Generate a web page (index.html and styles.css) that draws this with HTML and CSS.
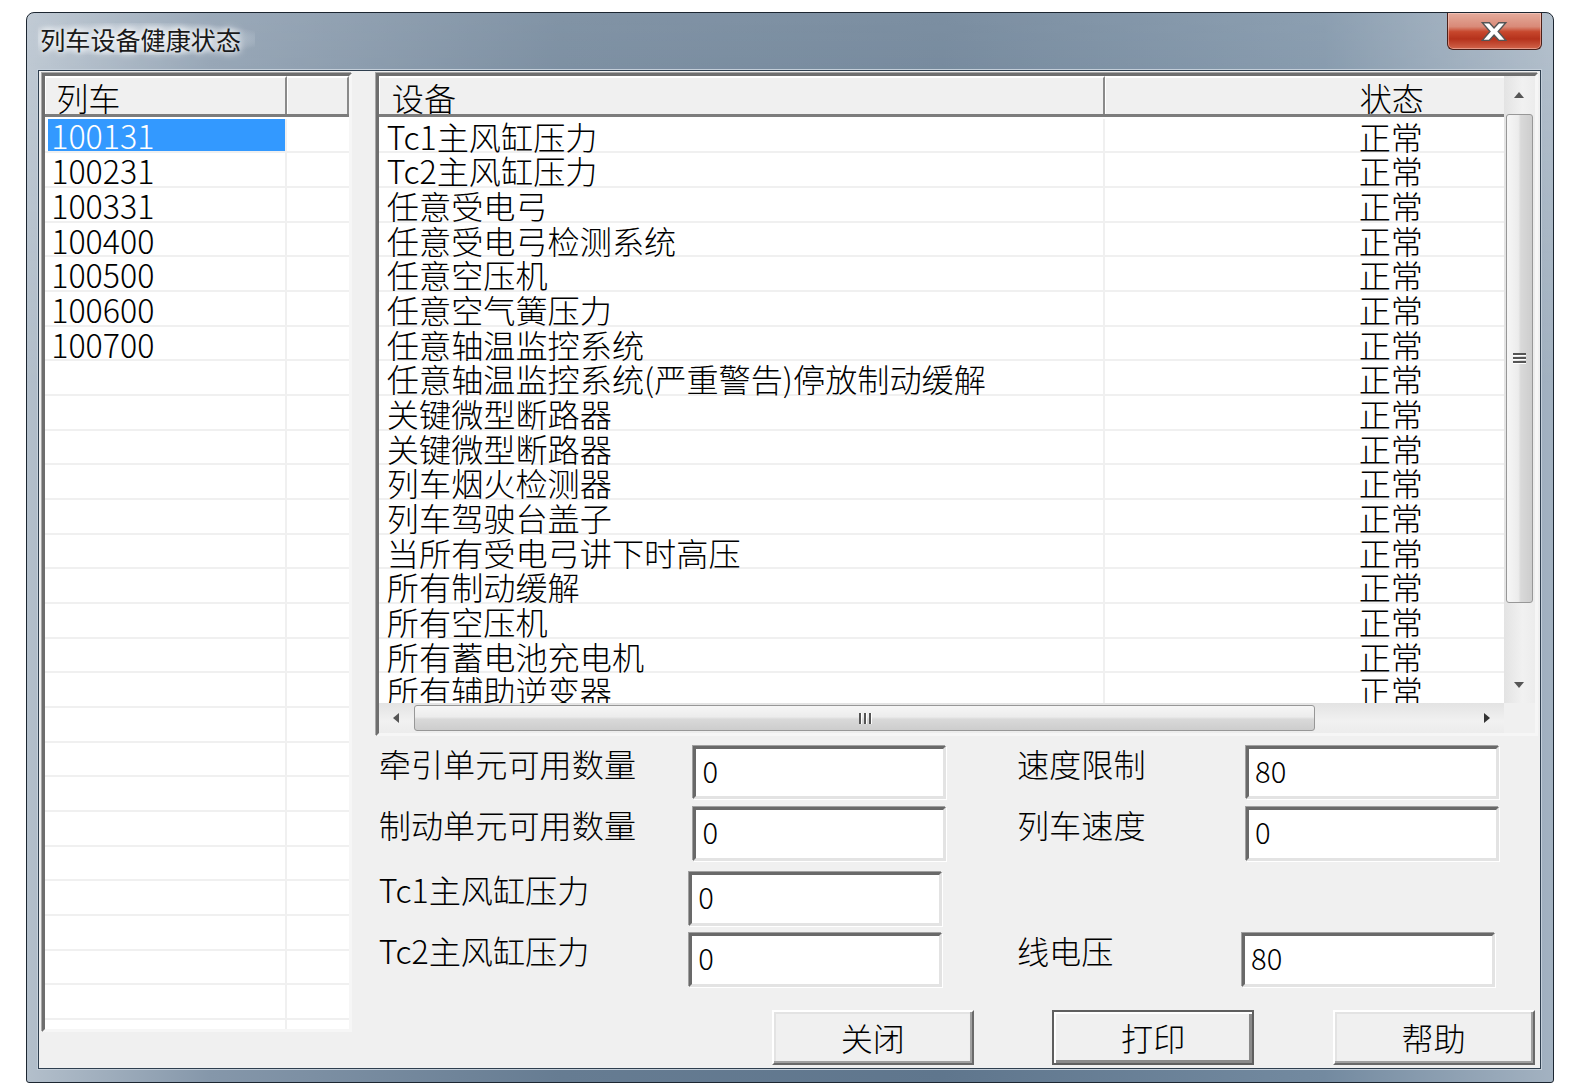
FILE: index.html
```html
<!DOCTYPE html>
<html lang="zh-CN">
<head>
  <meta charset="UTF-8">
  <title>列车设备健康状态</title>
  <link rel="stylesheet" href="styles.css">
</head>
<body>

<div class="window">
  <div class="titlebar">
    <div class="title-text">列车设备健康状态</div>
    <div class="close-btn">
      <svg width="30" height="21" viewBox="0 0 24 18"><polygon points="2,1.5 8,1.5 12,6 16,1.5 22,1.5 15.5,9 22,16.5 16,16.5 12,12 8,16.5 2,16.5 8.5,9" fill="#fff" stroke="#555" stroke-width="1.2"/></svg>
    </div>
  </div>

  <div class="client">
    <!-- 列车列表 -->
    <div class="train-list">
      <div class="lv-head">
        <div class="hcell t-col">列车</div>
        <div class="hcell t-rest"></div>
      </div>
      <div class="lv-body">
        <div class="row selected"><div class="cell t-col"><span>100131</span></div><div class="cell t-rest"></div></div>
        <div class="row"><div class="cell t-col">100231</div><div class="cell t-rest"></div></div>
        <div class="row"><div class="cell t-col">100331</div><div class="cell t-rest"></div></div>
        <div class="row"><div class="cell t-col">100400</div><div class="cell t-rest"></div></div>
        <div class="row"><div class="cell t-col">100500</div><div class="cell t-rest"></div></div>
        <div class="row"><div class="cell t-col">100600</div><div class="cell t-rest"></div></div>
        <div class="row"><div class="cell t-col">100700</div><div class="cell t-rest"></div></div>
        <div class="row"><div class="cell t-col"></div><div class="cell t-rest"></div></div>
        <div class="row"><div class="cell t-col"></div><div class="cell t-rest"></div></div>
        <div class="row"><div class="cell t-col"></div><div class="cell t-rest"></div></div>
        <div class="row"><div class="cell t-col"></div><div class="cell t-rest"></div></div>
        <div class="row"><div class="cell t-col"></div><div class="cell t-rest"></div></div>
        <div class="row"><div class="cell t-col"></div><div class="cell t-rest"></div></div>
        <div class="row"><div class="cell t-col"></div><div class="cell t-rest"></div></div>
        <div class="row"><div class="cell t-col"></div><div class="cell t-rest"></div></div>
        <div class="row"><div class="cell t-col"></div><div class="cell t-rest"></div></div>
        <div class="row"><div class="cell t-col"></div><div class="cell t-rest"></div></div>
        <div class="row"><div class="cell t-col"></div><div class="cell t-rest"></div></div>
        <div class="row"><div class="cell t-col"></div><div class="cell t-rest"></div></div>
        <div class="row"><div class="cell t-col"></div><div class="cell t-rest"></div></div>
        <div class="row"><div class="cell t-col"></div><div class="cell t-rest"></div></div>
        <div class="row"><div class="cell t-col"></div><div class="cell t-rest"></div></div>
        <div class="row"><div class="cell t-col"></div><div class="cell t-rest"></div></div>
        <div class="row"><div class="cell t-col"></div><div class="cell t-rest"></div></div>
        <div class="row"><div class="cell t-col"></div><div class="cell t-rest"></div></div>
        <div class="row"><div class="cell t-col"></div><div class="cell t-rest"></div></div>
        <div class="row"><div class="cell t-col"></div><div class="cell t-rest"></div></div>
      </div>
    </div>

    <div class="right-col">
      <!-- 设备列表 -->
      <div class="device-list">
        <div class="dl-view">
          <div class="lv-head">
            <div class="hcell d-col">设备</div>
            <div class="hcell s-col">状态</div>
          </div>
          <div class="lv-body">
            <div class="row"><div class="cell d-col">Tc1主风缸压力</div><div class="cell s-col">正常</div></div>
            <div class="row"><div class="cell d-col">Tc2主风缸压力</div><div class="cell s-col">正常</div></div>
            <div class="row"><div class="cell d-col">任意受电弓</div><div class="cell s-col">正常</div></div>
            <div class="row"><div class="cell d-col">任意受电弓检测系统</div><div class="cell s-col">正常</div></div>
            <div class="row"><div class="cell d-col">任意空压机</div><div class="cell s-col">正常</div></div>
            <div class="row"><div class="cell d-col">任意空气簧压力</div><div class="cell s-col">正常</div></div>
            <div class="row"><div class="cell d-col">任意轴温监控系统</div><div class="cell s-col">正常</div></div>
            <div class="row"><div class="cell d-col">任意轴温监控系统(严重警告)停放制动缓解</div><div class="cell s-col">正常</div></div>
            <div class="row"><div class="cell d-col">关键微型断路器</div><div class="cell s-col">正常</div></div>
            <div class="row"><div class="cell d-col">关键微型断路器</div><div class="cell s-col">正常</div></div>
            <div class="row"><div class="cell d-col">列车烟火检测器</div><div class="cell s-col">正常</div></div>
            <div class="row"><div class="cell d-col">列车驾驶台盖子</div><div class="cell s-col">正常</div></div>
            <div class="row"><div class="cell d-col">当所有受电弓讲下时高压</div><div class="cell s-col">正常</div></div>
            <div class="row"><div class="cell d-col">所有制动缓解</div><div class="cell s-col">正常</div></div>
            <div class="row"><div class="cell d-col">所有空压机</div><div class="cell s-col">正常</div></div>
            <div class="row"><div class="cell d-col">所有蓄电池充电机</div><div class="cell s-col">正常</div></div>
            <div class="row"><div class="cell d-col">所有辅助逆变器</div><div class="cell s-col">正常</div></div>
          </div>
        </div>

        <div class="vscroll">
          <div class="sb-arrow"><svg width="12" height="8" viewBox="0 0 12 8"><polygon points="6,1 11,7 1,7" fill="#555"/></svg></div>
          <div class="vthumb"><span class="grip-v"><i></i><i></i><i></i></span></div>
          <div class="sb-space"></div>
          <div class="sb-arrow"><svg width="12" height="8" viewBox="0 0 12 8"><polygon points="1,1 11,1 6,7" fill="#555"/></svg></div>
        </div>

        <div class="hscroll">
          <div class="sb-arrow"><svg width="8" height="12" viewBox="0 0 8 12"><polygon points="7,1 7,11 1,6" fill="#555"/></svg></div>
          <div class="hthumb"><span class="grip-h"><i></i><i></i><i></i></span></div>
          <div class="sb-space"></div>
          <div class="sb-arrow"><svg width="8" height="12" viewBox="0 0 8 12"><polygon points="1,1 7,6 1,11" fill="#333"/></svg></div>
        </div>

        <div class="sb-corner"></div>
      </div>

      <!-- 数值区 -->
      <div class="form">
        <div class="form-row">
          <div class="label">牵引单元可用数量</div>
          <div class="field">0</div>
          <div></div>
          <div class="label">速度限制</div>
          <div class="field">80</div>
        </div>
        <div class="form-row r2">
          <div class="label">制动单元可用数量</div>
          <div class="field">0</div>
          <div></div>
          <div class="label">列车速度</div>
          <div class="field">0</div>
        </div>
        <div class="form-row tight r3">
          <div class="label">Tc1主风缸压力</div>
          <div class="field">0</div>
        </div>
        <div class="form-row tight r4">
          <div class="label">Tc2主风缸压力</div>
          <div class="field">0</div>
          <div></div>
          <div class="label">线电压</div>
          <div class="field">80</div>
        </div>
      </div>

      <div class="buttons">
        <button class="btn">关闭</button>
        <button class="btn default">打印</button>
        <button class="btn">帮助</button>
      </div>
    </div>
  </div>
</div>

</body>
</html>
```

FILE: styles.css
```css
* {
  box-sizing: border-box;
}
html {
  zoom: 1.005;
}
body {
  margin: 0;
  background: #fff;
  font-family: "Noto Sans CJK SC", "Noto Sans", sans-serif;
  font-weight: 300;
  color: #000;
}

/* 窗口外框 */
.window {
  width: 1520px;
  height: 1066px;
  margin: 12px 0 0 26px;
  border: 1px solid #1c2631;
  border-radius: 8px 8px 3px 3px;
  background:
    linear-gradient(to bottom, rgba(255,255,255,0.18), rgba(255,255,255,0) 35%),
    linear-gradient(to right, #b3bfcb 0%, #8597aa 12%, #667c92 35%, #5f768d 60%, #738aa0 85%, #a3b2c1 100%);
  display: flex;
  flex-direction: column;
  padding: 0 12px 13px 11px;
}
.titlebar {
  height: 57px;
  display: flex;
  justify-content: space-between;
  align-items: flex-start;
}
.title-text {
  margin-top: 10px;
  padding: 2px 14px 2px 2px;
  font-size: 25px;
  font-weight: 400;
  line-height: 28px;
  color: #1a1a1a;
  background: radial-gradient(ellipse at 45% 50%, rgba(235,240,245,0.75) 0%, rgba(235,240,245,0.35) 55%, rgba(235,240,245,0) 80%);
  text-shadow: 0 0 6px #fff, 0 0 10px rgba(255,255,255,0.9);
}
.close-btn {
  width: 94px;
  height: 37px;
  margin-right: -1px;
  border: 1px solid #4b2019;
  border-top: none;
  border-radius: 0 0 6px 6px;
  background: linear-gradient(to bottom, #e4ab9c 0%, #d98a78 38%, #c7472d 52%, #b5321c 72%, #d1644a 100%);
  box-shadow: inset 0 0 0 1px rgba(255,220,210,0.45);
  display: flex;
  justify-content: center;
  align-items: center;
}

/* 客户区 */
.client {
  flex: 1;
  background: #f0f0f0;
  border: 1px solid #2f3f4f;
  box-shadow: 0 0 0 1px #c3ced9;
  display: flex;
  gap: 24px;
  padding: 2px 2px 3px 3px;
}

/* 列表通用 */
.lv-head {
  display: flex;
  height: 40px;
  border-bottom: 3px solid #7c7c7c;
  background: #f0f0f0;
}
.hcell {
  height: 100%;
  font-size: 32px;
  line-height: 38px;
  border-top: 2px solid #fff;
  border-left: 1px solid #fff;
  border-right: 2px solid #8a8a8a;
  white-space: nowrap;
}
.lv-body {
  padding-top: 2px;
  background: #fff;
}
.row {
  display: flex;
  height: 34.5px;
  border-bottom: 2px solid #f0f0f0;
}
.cell {
  font-size: 32px;
  line-height: 32.5px;
  padding-top: 1px;
  white-space: nowrap;
}

/* 左边列车列表 */
.train-list {
  width: 308px;
  height: 954px;
  border: 3px solid;
  border-color: #6e6e6e #f6f6f6 #f6f6f6 #6e6e6e;
  box-shadow: -1px -1px 0 #a8a8a8;
  background: #fff;
  overflow: hidden;
}
.train-list .t-col {
  width: 241px;
}
.train-list .t-rest {
  flex: 1;
}
.train-list .hcell.t-col {
  padding-left: 10px;
}
.train-list .cell.t-col {
  padding-left: 6px;
  border-right: 2px solid #f0f0f0;
}
.row.selected .cell.t-col {
  padding: 0 0 0 3px;
}
.row.selected .cell.t-col span {
  display: block;
  height: 100%;
  padding: 1px 0 0 3px;
  line-height: 31.5px;
  background: #3399ff;
  color: #fff;
}

/* 右边设备列表 */
.right-col {
  width: 1156px;
  display: flex;
  flex-direction: column;
}
.device-list {
  height: 659px;
  border: 3px solid;
  border-color: #6e6e6e #f6f6f6 #f6f6f6 #6e6e6e;
  box-shadow: -1px -1px 0 #a8a8a8;
  background: #fff;
  display: grid;
  grid-template-columns: 1fr 30px;
  grid-template-rows: 1fr 29px;
}
.dl-view {
  overflow: hidden;
}
.device-list .d-col {
  width: 723px;
}
.device-list .s-col {
  flex: 1;
}
.device-list .hcell.d-col {
  padding-left: 12px;
}
.device-list .hcell.s-col {
  padding-left: 252px;
  border-right: none;
}
.device-list .cell.d-col {
  padding-left: 8px;
  border-right: 2px solid #f0f0f0;
}
.device-list .cell.s-col {
  padding-left: 252px;
}

/* 滚动条 */
.vscroll {
  display: flex;
  flex-direction: column;
  background: linear-gradient(to right, #e3e3e3, #f1f1f1 60%, #ececec);
}
.vscroll .sb-arrow {
  height: 37px;
  display: flex;
  justify-content: center;
  align-items: center;
}
.vthumb {
  height: 487px;
  margin: 0 2px;
  border: 1px solid #979797;
  border-radius: 3px;
  background: linear-gradient(to right, #f6f6f6, #ececec 45%, #d9d9d9 55%, #cdcdcd);
  display: flex;
  justify-content: center;
  align-items: center;
}
.sb-space {
  flex: 1;
}
.grip-v i {
  display: block;
  width: 13px;
  height: 2px;
  margin: 2px 0;
  background: #555;
  box-shadow: 0 1px 0 #fff;
}
.hscroll {
  display: flex;
  align-items: stretch;
  background: linear-gradient(to bottom, #e3e3e3, #f1f1f1 60%, #ececec);
}
.hscroll .sb-arrow {
  width: 35px;
  display: flex;
  justify-content: center;
  align-items: center;
}
.hthumb {
  width: 897px;
  margin: 2px 0;
  border: 1px solid #979797;
  border-radius: 3px;
  background: linear-gradient(to bottom, #f6f6f6, #ececec 45%, #d9d9d9 55%, #cdcdcd);
  display: flex;
  justify-content: center;
  align-items: center;
}
.grip-h {
  display: flex;
}
.grip-h i {
  display: block;
  width: 2px;
  height: 11px;
  margin: 0 1.5px;
  background: #555;
  box-shadow: 1px 0 0 #fff;
}
.sb-corner {
  background: #f0f0f0;
}

/* 数值表单 */
.form {
  margin-top: 10px;
  padding-left: 3px;
}
.form-row {
  display: grid;
  grid-template-columns: 313px 251px 71px 228px 252px;
  height: 53px;
}
.form-row.tight {
  grid-template-columns: 309px 251px 75px 224px 252px;
}
.form-row.r2 {
  margin-top: 8px;
  height: 54px;
}
.form-row.r3 {
  margin-top: 11px;
}
.form-row.r4 {
  margin-top: 7px;
  height: 54px;
}
.label {
  font-size: 32px;
  line-height: 34px;
  white-space: nowrap;
}
.field {
  background: #fff;
  border: 3px solid;
  border-color: #696969 #e3e3e3 #e3e3e3 #696969;
  box-shadow: -1px -1px 0 #a0a0a0, 1px 1px 0 #fff;
  font-size: 29px;
  line-height: 42px;
  padding-left: 6px;
}

/* 按钮 */
.buttons {
  margin-top: 23px;
  padding-right: 3px;
  display: flex;
  justify-content: flex-end;
  gap: 78px;
}
.btn {
  width: 201px;
  height: 55px;
  font-family: inherit;
  font-weight: 300;
  font-size: 32px;
  line-height: 1;
  color: #000;
  background: #f0f0f0;
  border: 2px solid;
  border-color: #fff #6a6a6a #6a6a6a #fff;
  box-shadow: inset -2px -2px 0 #a0a0a0, inset 2px 2px 0 #e3e3e3;
  padding: 0;
}
.btn.default {
  border: 2px solid #5f5f5f;
  box-shadow: inset 2px 2px 0 #fff, inset -3px -3px 0 #8a8a8a;
}
```
